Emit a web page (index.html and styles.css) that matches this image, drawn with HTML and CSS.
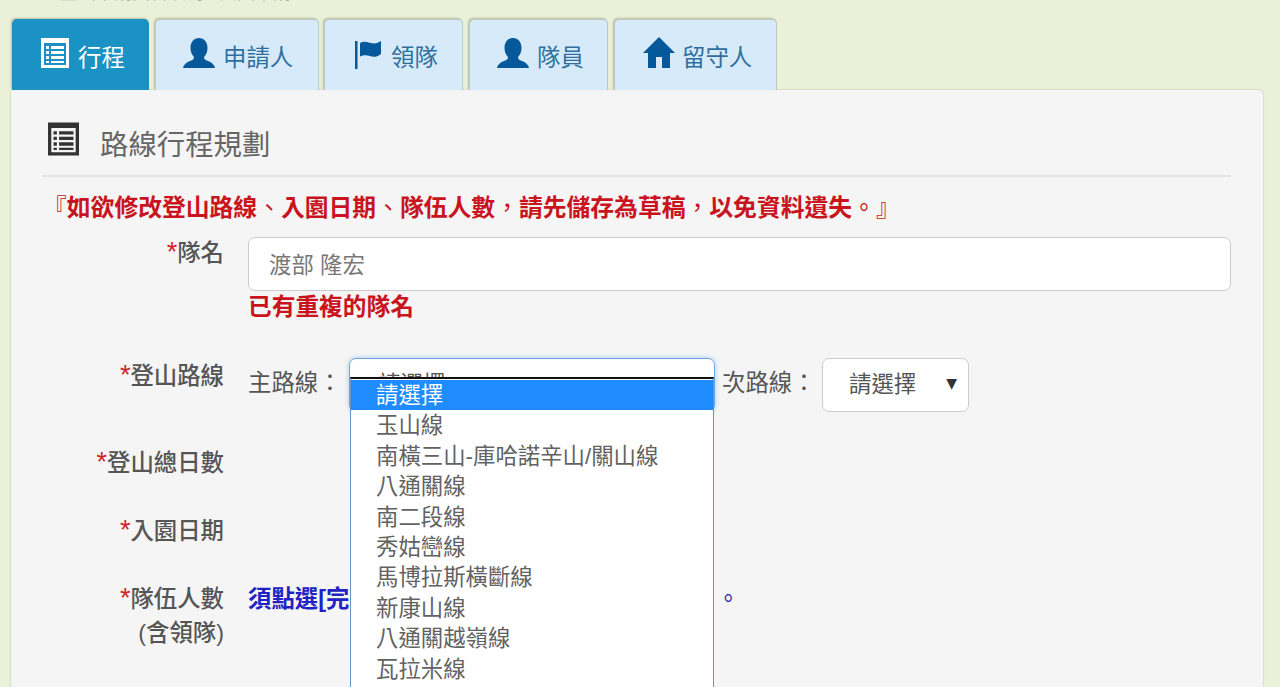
FILE: index.html
```html
<!DOCTYPE html>
<html lang="zh-Hant">
<head>
<meta charset="utf-8">
<title>路線行程規劃</title>
<link rel="stylesheet" href="styles.css">
</head>
<body>
<svg class="defs" aria-hidden="true">
  <symbol id="i-list" viewBox="0 0 28 30"><path fill-rule="evenodd" d="M0 0H28V30H0ZM3 5V27H25V5ZM5 8H8V11H5ZM10 8H23V11H10ZM5 13H8V16H5ZM10 13H23V16H10ZM5 18H8V21H5ZM10 18H23V21H10ZM5 23H8V25H5ZM10 23H23V25H10Z"/></symbol>
  <symbol id="i-user" viewBox="0 0 32 30"><path d="M16 0C21 0 24.5 4 24.5 10C24.5 14 23 17 21 19C21 21 22 22 25 23C29 24.5 31.5 27 32 30H0C.5 27 3 24.5 7 23C10 22 11 21 11 19C9 17 7.5 14 7.5 10C7.5 4 11 0 16 0Z"/></symbol>
  <symbol id="i-flag" viewBox="0 0 26 28"><path d="M0 0H2.500V28H0ZM5 2C9 -.5 13 1 16 2C19 3 22 2.500 26 0V13C22 16 18 16.500 15 15C12 14 9 13.500 5 15.500Z"/></symbol>
  <symbol id="i-home" viewBox="0 0 32 31"><path d="M16 0L32 16H27V31H19V20H13V31H5V16H0Z"/></symbol>
</svg>
<div class="crumb"><span class="crumb-text">登山申請資料填寫 / 入園申請</span></div>
<nav class="tabs">
  <a class="tab tab-active tab-a"><svg class="ico ico-list"><use href="#i-list"/></svg><span>行程</span></a>
  <a class="tab tab-b"><svg class="ico ico-user"><use href="#i-user"/></svg><span>申請人</span></a>
  <a class="tab tab-c"><svg class="ico ico-flag"><use href="#i-flag"/></svg><span>領隊</span></a>
  <a class="tab tab-d"><svg class="ico ico-user"><use href="#i-user"/></svg><span>隊員</span></a>
  <a class="tab tab-e"><svg class="ico ico-home"><use href="#i-home"/></svg><span>留守人</span></a>
</nav>
<main class="panel">
  <h2 class="panel-title"><svg class="title-ico"><use href="#i-list"/></svg><span>路線行程規劃</span></h2>
  <p class="warn"><i class="punct">『</i>如欲修改登山路線<i class="punct">、</i>入園日期<i class="punct">、</i>隊伍人數<i class="punct">，</i>請先儲存為草稿<i class="punct">，</i>以免資料遺失<i class="punct">。』</i></p>
  <div class="row row-name">
    <div class="label"><b class="req">*</b>隊名</div>
    <div class="field">
      <input class="text-input" type="text" value="渡部 隆宏">
      <div class="error">已有重複的隊名</div>
    </div>
  </div>
  <div class="row row-route">
    <div class="label"><b class="req">*</b>登山路線</div>
    <div class="field route">
      <span class="route-label">主路線：</span>
      <div class="select select-main">
        <span class="select-value">請選擇</span>
        <ul class="options">
          <li class="option-on">請選擇</li>
          <li>玉山線</li>
          <li>南橫三山-庫哈諾辛山/關山線</li>
          <li>八通關線</li>
          <li>南二段線</li>
          <li>秀姑巒線</li>
          <li>馬博拉斯橫斷線</li>
          <li>新康山線</li>
          <li>八通關越嶺線</li>
          <li>瓦拉米線</li>
        </ul>
      </div>
      <span class="route-label route-label-2">次路線：</span>
      <div class="select select-sub"><span class="select-value">請選擇</span><span class="arrow">▼</span></div>
    </div>
  </div>
  <div class="row row-days"><div class="label"><b class="req">*</b>登山總日數</div></div>
  <div class="row row-date"><div class="label"><b class="req">*</b>入園日期</div></div>
  <div class="row row-count">
    <div class="label"><b class="req">*</b>隊伍人數<br>(含領隊)</div>
    <div class="field notice"><span>須點選[完</span><span class="notice-end">。</span></div>
  </div>
</main>
</body>
</html>
```
FILE: styles.css
```css
* { box-sizing: border-box; }
html, body { margin: 0; height: 687px; overflow: hidden; }
body {
  background: #ebf0d8;
  color: #555;
  font-family: "Liberation Sans", "Noto Sans CJK TC", sans-serif;
  font-size: 23.4px;
}
.defs { display: none; }
.crumb { height: 19px; padding-left: 60px; overflow: hidden; }
.crumb-text { display: block; margin-top: -17px; line-height: 20px; font-size: 18px; color: #aaa; }

.tabs { display: flex; height: 71px; padding-left: 12px; gap: 6px; }
.tab {
  display: flex;
  align-items: flex-start;
  padding-top: 18px;
  background: #d6eafa;
  color: #2f6f9f;
  border: 1px solid #b9c9c4;
  border-bottom: 0;
  border-radius: 5px 5px 0 0;
  box-shadow: -1px -1px 2px rgba(120, 130, 90, .45);
  fill: #05599a;
}
.tab span { line-height: 34px; margin-top: 3px; }
.tab-active { background: #1b92c4; border-color: #1b92c4; color: #fff; fill: #fff; }
.tab-a { width: 137px; padding-left: 28px; gap: 9px; }
.tab-b { width: 164px; padding-left: 27px; gap: 8px; }
.tab-c { width: 139px; padding-left: 30px; gap: 10px; margin-left: -1px; }
.tab-d { width: 139px; padding-left: 27px; gap: 8px; }
.tab-e { width: 163px; padding-left: 28px; gap: 7px; }
.ico { flex: none; }
.ico-list { width: 28px; height: 30px; }
.ico-user { width: 32px; height: 30px; }
.ico-flag { width: 26px; height: 28px; margin-top: 3px; }
.ico-home { width: 32px; height: 31px; margin-top: -1px; }

.panel {
  margin-left: 11px;
  width: 1252px;
  height: 700px;
  padding: 0 32px;
  background: #f5f5f5;
  border-radius: 0 5px 0 0;
  box-shadow: 0 0 2px rgba(0, 0, 0, .25);
}
.panel-title {
  display: flex;
  align-items: center;
  height: 87px;
  margin: 0;
  padding: 20px 0 0 5px;
  gap: 21px;
  border-bottom: 2px solid #e4e4e4;
  font-size: 28.4px;
  font-weight: 400;
  color: #666;
  fill: #333;
}
.title-ico { width: 31px; height: 34px; margin-top: -7px; }
.warn {
  margin: 16px 0 0;
  line-height: 30px;
  font-size: 23.8px;
  font-weight: 700;
  color: #c9141e;
}
.punct { font-style: normal; font-weight: 400; }
.row { display: grid; grid-template-columns: 181px 1fr; column-gap: 24px; }
.label { padding-top: 1px; text-align: right; font-weight: 500; color: #555; line-height: 30px; }
.req { font-size: 27px; line-height: 1; color: #d2232a; font-weight: 400; }
.row-name { margin-top: 14px; }
.text-input {
  display: block;
  width: 100%;
  height: 54px;
  padding: 0 20px 2px;
  border: 1px solid #ccc;
  border-radius: 7px;
  background: #fff;
  color: #777;
  font-family: inherit;
  font-size: 22.4px;
}
.error { line-height: 30px; margin-top: 1px; font-weight: 700; color: #c9141e; font-size: 23.7px; }

.row-route { margin-top: 36px; }
.row-route .label { padding-top: 3px; }
.route { display: flex; align-items: flex-start; }
.route-label { width: 101px; line-height: 50px; }
.route-label-2 { width: 100px; margin-left: 7px; }
.select {
  position: relative;
  height: 54px;
  background: #fff;
  border: 1px solid #ccc;
  border-radius: 7px;
  text-align: left;
  font-size: 22.4px;
  line-height: 52px;
}
.select-main {
  width: 366px;
  padding-left: 28px;
  border-color: #6fa8e0;
  box-shadow: 0 0 5px rgba(102, 175, 233, .6);
}
.select-sub { display: flex; width: 147px; padding-left: 26px; }
.arrow { margin-left: 30px; font-family: "DejaVu Sans", sans-serif; font-size: 14px; color: #333; line-height: 48px; }
.options {
  position: absolute;
  left: 0;
  top: 18px;
  width: 364px;
  height: 320px;
  margin: 0;
  padding: 0;
  list-style: none;
  overflow: hidden;
  background: #fff;
  border-top: 2px solid #111;
  border-left: 1px solid #6d94c9;
  border-right: 1px solid #6d94c9;
  color: #626262;
}
.options li { height: 30.4px; padding-left: 25px; line-height: 32px; white-space: nowrap; }
.options .option-on { background: #1e8cff; color: #fff; margin-top: 1px; }

.row-days { margin-top: 35px; }
.row-date { margin-top: 37px; }
.row-count { margin-top: 35px; }
.row-count .label { line-height: 34px; }
.notice {
  display: flex;
  justify-content: space-between;
  width: 492px;
  line-height: 34px;
  padding-top: 1px;
  font-weight: 700;
  color: #2222c4;
}
.notice-end { font-weight: 400; }
```
